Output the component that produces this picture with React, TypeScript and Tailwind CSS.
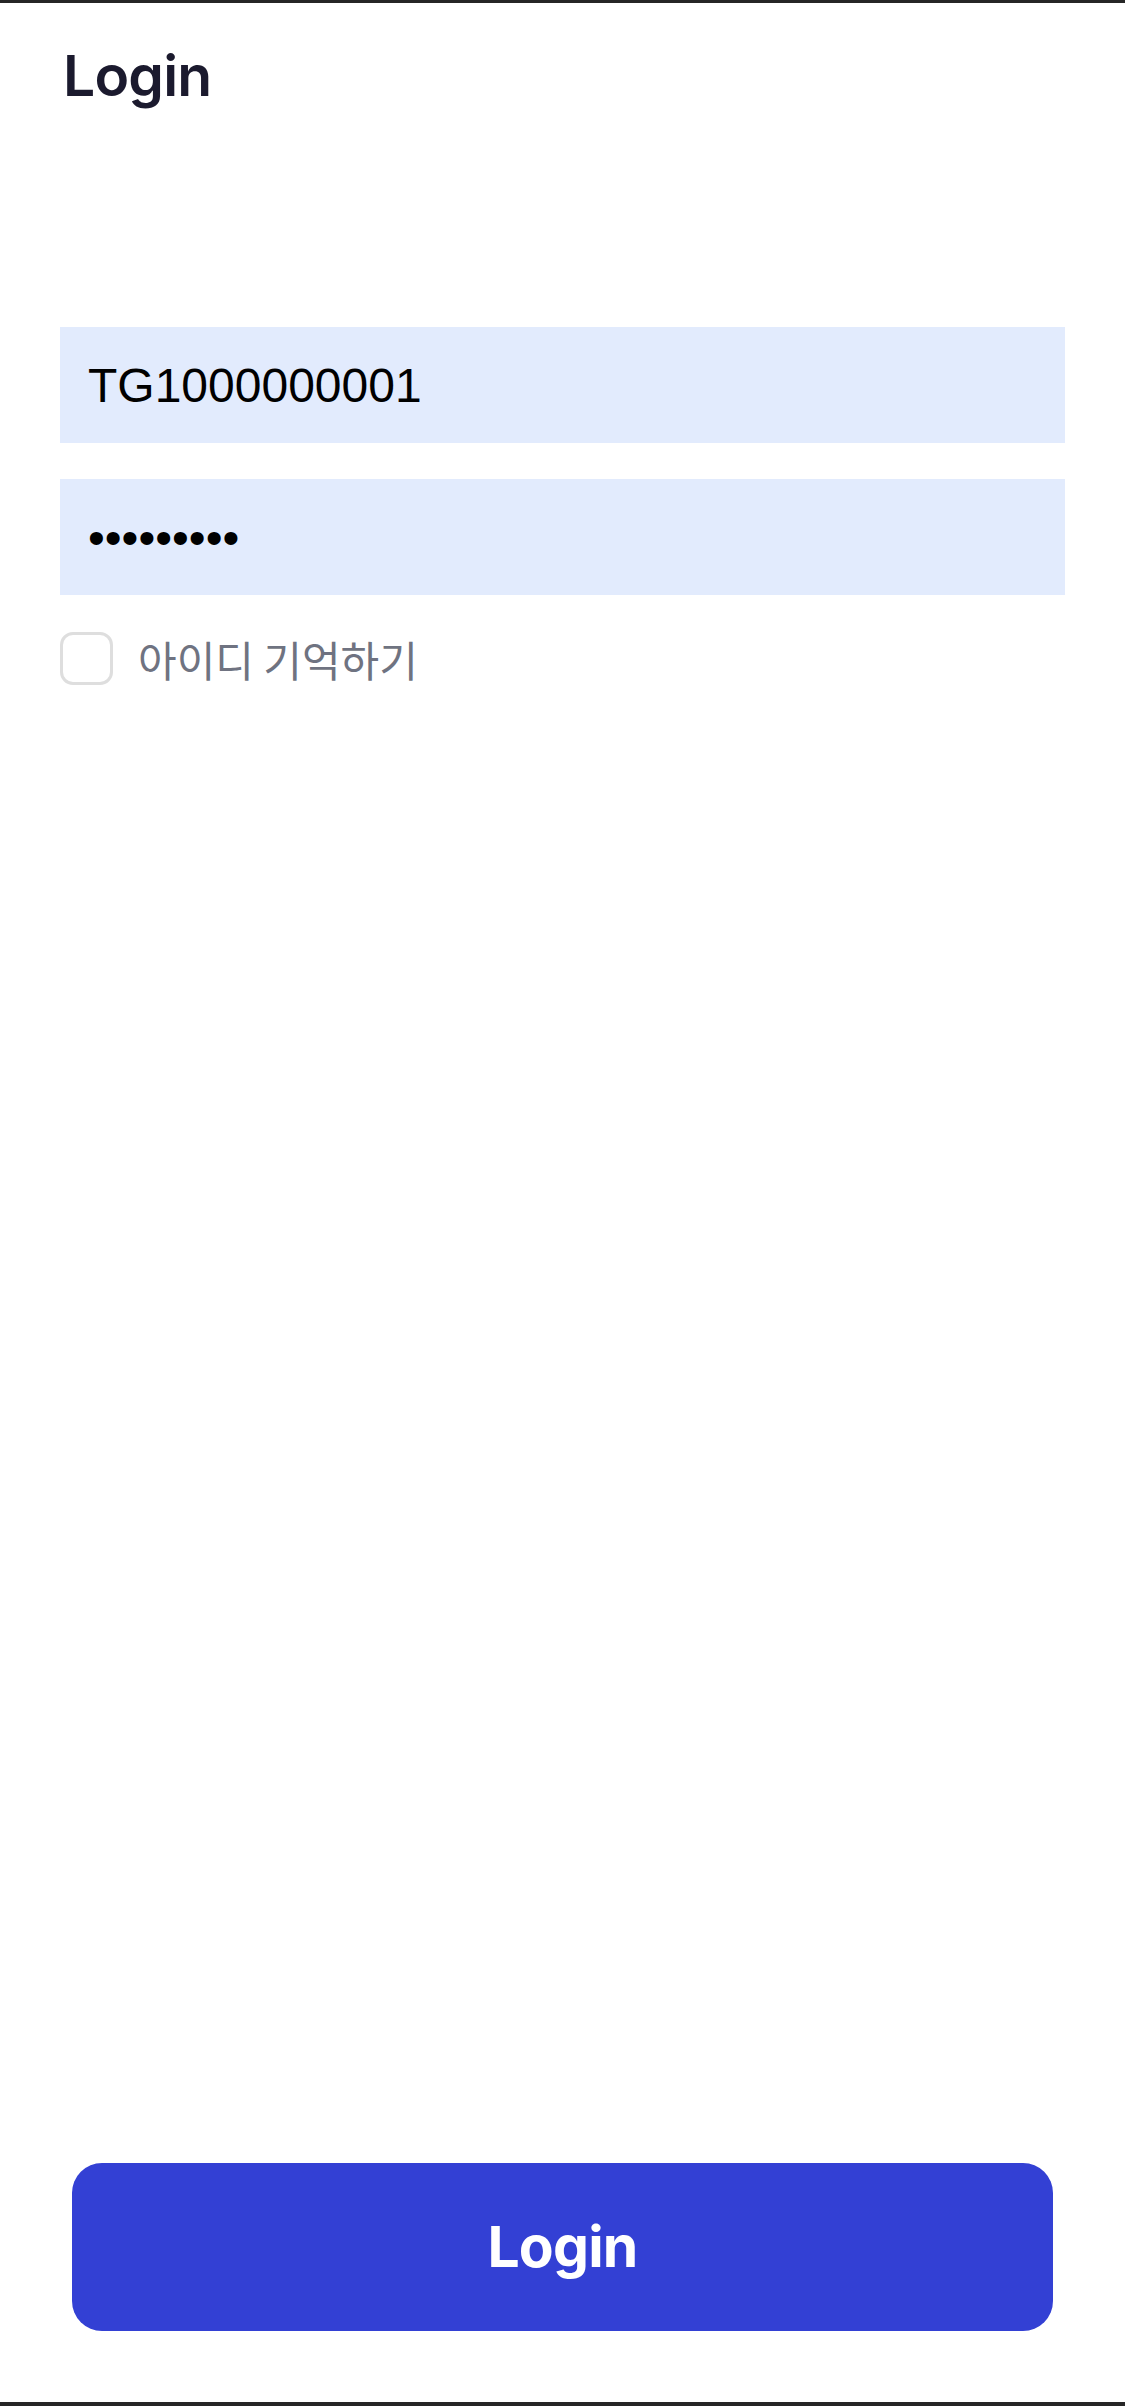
export default function App() {
  return (
    <div className="flex h-[2406px] flex-col border-t-[3px] border-b-4 border-[#262626] bg-white">
      <header className="px-[63px] pt-[37px]">
        <h1 className="font-['Inter',sans-serif] text-[57px] leading-[72px] font-semibold tracking-[-0.8px] text-[#1b1a2e]">
          Login
        </h1>
      </header>

      <form className="mt-[215px] flex flex-col px-[60px]">
        <input
          type="text"
          defaultValue="TG1000000001"
          className="h-[116px] w-full bg-[#e2ebfd] px-[28px] font-['Liberation_Sans',Arial,sans-serif] text-[48px] text-black outline-none"
        />
        <input
          type="password"
          defaultValue="123456789"
          className="mt-[36px] h-[116px] w-full bg-[#e2ebfd] px-[28px] font-['Liberation_Sans',Arial,sans-serif] text-[48px] text-black outline-none"
        />
        <label className="mt-[37px] flex items-center gap-[25px]">
          <input
            type="checkbox"
            className="h-[53px] w-[53px] appearance-none rounded-[13px] border-[3px] border-[#dedede] bg-white"
          />
          <span className="font-['Noto_Sans_CJK_KR','Noto_Sans',sans-serif] text-[42px] leading-none text-[#6f7381]">
            아이디 기억하기
          </span>
        </label>
      </form>

      <div className="mt-auto px-[72px] pb-[71px]">
        <button
          type="button"
          className="h-[168px] w-full rounded-[30px] bg-[#3340d4] font-['Inter',sans-serif] text-[57px] font-bold tracking-[-0.8px] text-white"
        >
          Login
        </button>
      </div>
    </div>
  );
}
